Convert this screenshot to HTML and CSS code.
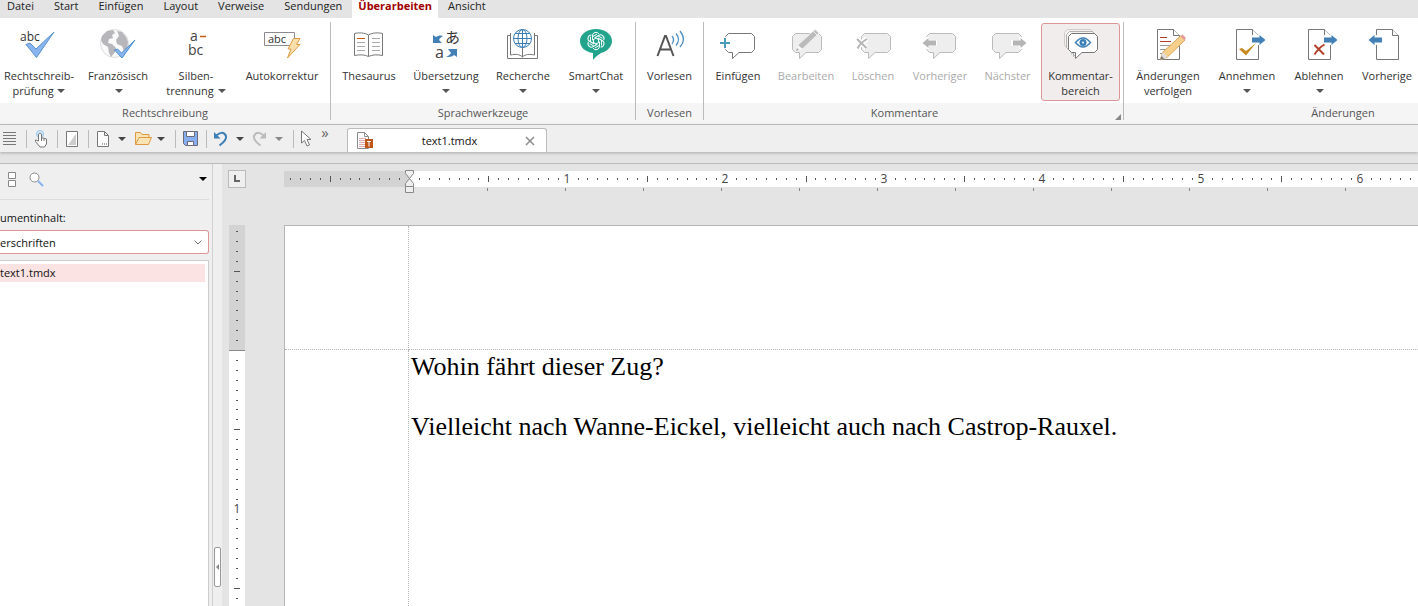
FILE: index.html
```html
<!doctype html>
<html lang="de">
<head>
    <meta charset="utf-8">
    <meta name="viewport" content="width=device-width, initial-scale=1.0">
    <title>text1.tmdx - TextMaker</title>
    <link rel="stylesheet" href="styles.css">
</head>
<body>
    <!-- shared shapes -->
    <svg class="defs" width="0" height="0" aria-hidden="true">
        <symbol id="bubble" viewBox="0 0 32 28">
            <path d="M3.500 1.500h23l3 3v13l-3 3H14l-6.500 6v-6h-4l-3-3v-13z" stroke-linejoin="round"/>
        </symbol>
        <symbol id="sheet" viewBox="0 0 24 32">
            <path d="M.5.500h16l6 6v24H.5z" fill="#fff" stroke="#777"/>
            <path d="M16.500.500v6h6" fill="#fff" stroke="#777"/>
        </symbol>
        <symbol id="arrow" viewBox="0 0 14 10">
            <path d="M0 2.500h7.500V0L13.500 5l-6 5V7.500H0z"/>
        </symbol>
    </svg>

    <nav class="menu">
        <a href="#">Datei</a>
        <a href="#">Start</a>
        <a href="#">Einfügen</a>
        <a href="#">Layout</a>
        <a href="#">Verweise</a>
        <a href="#">Sendungen</a>
        <a href="#" class="active">Überarbeiten</a>
        <a href="#">Ansicht</a>
    </nav>

    <div class="ribbon">
        <section class="group spelling">
            <div class="group-buttons">
                <button class="big">
                    <svg class="icon" viewBox="0 0 40 34"><text x="1" y="13" font-size="12" fill="#333">abc</text><path d="M7 16.500l4-1.500 6 6L35 4 17.500 29.500z" fill="#89b4ee" stroke="#5b94cf"/></svg>
                    <span>Rechtschreib-<br>prüfung <i class="caret"></i></span>
                </button>
                <button class="big">
                    <svg class="icon" viewBox="0 0 40 34"><circle cx="16.500" cy="15.500" r="14" fill="#fafafa" stroke="#dcdcdf"/><path d="M4 8l5-5 6-1 2 3-3 2 1 3-4 1-1 4 4 1 4 4-1 4-4 5-2-4-1-6-5-3-2-4zM19 3l5 1 4 5 2 5-1 7-3 2-2-5-5-2-1-4 3-4-1-3z" fill="#b6b6bb"/><path d="M16.500 22l3-1 4 4L37 12 24 30z" fill="#89b4ee" stroke="#4a8fd0"/></svg>
                    <span>Französisch<br><i class="caret"></i></span>
                </button>
                <button class="big">
                    <svg class="icon" viewBox="0 0 40 34"><text x="14" y="13" font-size="14" fill="#444">a</text><path d="M24 8.500h6" stroke="#c55a11" stroke-width="1.500"/><text x="12" y="27" font-size="14" fill="#444">bc</text></svg>
                    <span>Silben-<br>trennung <i class="caret"></i></span>
                </button>
                <button class="big">
                    <svg class="icon" viewBox="0 0 40 34"><path d="M2.500 4.500h30v13h-30z" fill="#fff" stroke="#8f8a90"/><text x="6" y="15" font-size="11" fill="#333">abc</text><path d="M31.500 10.500H38L34.500 16.500H38L25.500 30l3.500-9h-3z" fill="#fbe0ae" stroke="#dd9a42"/></svg>
                    <span>Autokorrektur</span>
                </button>
            </div>
            <h2>Rechtschreibung</h2>
        </section>

        <section class="group language">
            <div class="group-buttons">
                <button class="big">
                    <svg class="icon" viewBox="0 0 40 34" fill="none" stroke="#777"><path d="M19.500 7C15 4.500 10 4.500 5.500 5.500v22c5-1 10-1 14 1 4-2 9-2 14-1v-22c-4.500-1-9.500-1-14 1.500zv21"/><path d="M8 14.500h8M8 18.500h8M8 22.500h8M23 10.500h8M23 14.500h8M23 18.500h8M23 22.500h8" stroke="#aaa"/><path d="M8 10.500h8" stroke="#c55a11"/></svg>
                    <span>Thesaurus</span>
                </button>
                <button class="big">
                    <svg class="icon" viewBox="0 0 40 34"><path d="M7 7v8h9l-3-3c1-2 2-3 4-4-3-1-5 0-7 1z" fill="#4380b5"/><path d="M31 21v8l-3-2c-2 2-5 2-8 2 3-1 4-3 5-4l-3-4z" fill="#4380b5"/><text x="19" y="15" font-size="15" fill="#333">あ</text><text x="9" y="30" font-size="16" fill="#444">a</text></svg>
                    <span>Übersetzung<br><i class="caret"></i></span>
                </button>
                <button class="big">
                    <svg class="icon" viewBox="0 0 40 34" fill="none" stroke="#777"><path d="M8 7.500H4.500v23h30v-23H31M7.500 5v22c5-1 9-1 12 2 3-3 7-3 12-2V5M19.500 20v9"/><g stroke="#3c7fb6"><circle cx="19.500" cy="10.500" r="9" fill="#fff"/><ellipse cx="19.500" cy="10.500" rx="4.500" ry="9"/><path d="M10.500 10.500h18M19.500 1.500v18M12 5.500h15M12 15.500h15"/></g></svg>
                    <span>Recherche<br><i class="caret"></i></span>
                </button>
                <button class="big">
                    <svg class="icon" viewBox="0 0 40 34"><path d="M20 1c9 0 16 5 16 12 0 5-4 9-8 11-4 1-8 4-11 8V25C9 24 4 19 4 13 4 6 11 1 20 1z" fill="#22a48c"/><g fill="none" stroke="#fff"><path id="petal" d="M20 10l-3.500 2V8a3.500 3.500 0 0 1 6.500-2M17 8.500l4-2.500"/><use href="#petal" transform="rotate(60 20 13)"/><use href="#petal" transform="rotate(120 20 13)"/><use href="#petal" transform="rotate(180 20 13)"/><use href="#petal" transform="rotate(240 20 13)"/><use href="#petal" transform="rotate(300 20 13)"/></g></svg>
                    <span>SmartChat<br><i class="caret"></i></span>
                </button>
            </div>
            <h2>Sprachwerkzeuge</h2>
        </section>

        <section class="group reading">
            <div class="group-buttons">
                <button class="big">
                    <svg class="icon" viewBox="0 0 40 34" fill="none"><path d="M7.500 28L15 8h1l7.500 20M10 21.500h11" stroke="#555" stroke-width="2"/><path d="M22 8q3 3.500 0 8M26 5.500q5 6 0 12M30 3q7 8.500 0 16" stroke="#4c8fc4" stroke-width="1.300"/></svg>
                    <span>Vorlesen</span>
                </button>
            </div>
            <h2>Vorlesen</h2>
        </section>

        <section class="group comments">
            <div class="group-buttons">
                <button class="big">
                    <svg class="icon" viewBox="0 0 40 34"><use href="#bubble" x="7" y="4" width="32" height="28" fill="#fff" stroke="#777"/><path d="M0 9h9v12H0z" fill="#fff"/><path d="M2 15h10M7 10v10" stroke="#4a9aba" stroke-width="2"/></svg>
                    <span>Einfügen</span>
                </button>
                <button class="big" disabled>
                    <svg class="icon" viewBox="0 0 40 34"><use href="#bubble" x="6" y="4" width="32" height="28" fill="#eee" stroke="#bbb"/><path d="M10 23l2-6L29 1.500l4 3.500-16 15.500z" fill="#bbb" stroke="#eee"/><path d="M10 23l2-6 4.500 4z" fill="#f8f8f8"/><path d="M10 23l1-3 2 2z" fill="#aaa"/><path d="M27 3l4 4" stroke="#eee"/></svg>
                    <span>Bearbeiten</span>
                </button>
                <button class="big" disabled>
                    <svg class="icon" viewBox="0 0 40 34"><use href="#bubble" x="8" y="4" width="32" height="28" fill="#eee" stroke="#bbb"/><path d="M4 11l9.500 9M14 11q-7 4-9.500 9.500" fill="none" stroke="#fff" stroke-width="5"/><path d="M4 11l9.500 9M14 11q-7 4-9.500 9.500" fill="none" stroke="#b5b5b5" stroke-width="2"/></svg>
                    <span>Löschen</span>
                </button>
                <button class="big" disabled>
                    <svg class="icon" viewBox="0 0 40 34"><use href="#bubble" x="6" y="4" width="32" height="28" fill="#eee" stroke="#bbb"/><path d="M1 9h8v3h8v6H9v3H1z" fill="#fff"/><g transform="matrix(-1 0 0 1 16 10)"><use href="#arrow" width="14" height="10" fill="#b5b5b5"/></g></svg>
                    <span>Vorheriger</span>
                </button>
                <button class="big" disabled>
                    <svg class="icon" viewBox="0 0 40 34"><use href="#bubble" x="4" y="4" width="32" height="28" fill="#eee" stroke="#bbb"/><path d="M39 9h-8v3h-8v6h8v3h8z" fill="#fff"/><use href="#arrow" x="25" y="10" width="14" height="10" fill="#b5b5b5"/></svg>
                    <span>Nächster</span>
                </button>
                <button class="big pressed" aria-pressed="true">
                    <svg class="icon" viewBox="0 0 40 34" fill="#f5f2f2"><use href="#bubble" x="3" y="0" width="32" height="28" stroke="#d0cccc"/><use href="#bubble" x="5" y="2" width="32" height="28" stroke="#b5b0b0"/><use href="#bubble" x="7" y="4" width="32" height="28" fill="#fff" stroke="#777"/><path d="M14.500 14.500q7.500-9 15 0-7.500 9-15 0z" fill="#fff" stroke="#3c7fb6" stroke-width="1.300"/><circle cx="22" cy="14.500" r="3.500" fill="#3c7fb6"/><circle cx="22" cy="14.500" r="1" fill="#fff"/></svg>
                    <span>Kommentar-<br>bereich</span>
                </button>
            </div>
            <h2>Kommentare</h2>
            <button class="launcher" aria-label="Kommentare"></button>
        </section>

        <section class="group changes">
            <div class="group-buttons">
                <button class="big">
                    <svg class="icon" viewBox="0 0 40 34"><use href="#sheet" x="9" y="1" width="24" height="32"/><path d="M12 9.500h7M12 13.500h11" stroke="#b5402a"/><path d="M12 17.500h13M12 21.500h9M12 25.500h6" stroke="#999"/><path d="M12 32l3-8L32.500 8l4.500 4-17.500 17z" fill="#f6cf8b" stroke="#dda65a"/><path d="M15 24l4.500 5L12 32z" fill="#ddd"/><path d="M12 32l1.500-4 2.500 2.500z" fill="#777"/><path d="M32.500 8l2-1.500 3.500 3.500-1.500 2z" fill="#e8999c"/></svg>
                    <span>Änderungen<br>verfolgen</span>
                </button>
                <button class="big">
                    <svg class="icon" viewBox="0 0 40 34"><use href="#sheet" x="9" y="1" width="24" height="32"/><path d="M25 7h14v10H25z" fill="#fff"/><use href="#arrow" x="25" y="7" width="14" height="10" fill="#4380b5"/><path d="M12 21l3-1 4 3 10-8-10 12.500z" fill="#c68a1e"/></svg>
                    <span>Annehmen<br><i class="caret"></i></span>
                </button>
                <button class="big">
                    <svg class="icon" viewBox="0 0 40 34"><use href="#sheet" x="9" y="1" width="24" height="32"/><path d="M25 7h14v10H25z" fill="#fff"/><use href="#arrow" x="25" y="7" width="14" height="10" fill="#4380b5"/><path d="M15.500 17l9.500 9.500M25.500 16.500q-6 3.500-10 10" fill="none" stroke="#b5402a" stroke-width="2"/></svg>
                    <span>Ablehnen<br><i class="caret"></i></span>
                </button>
                <button class="big">
                    <svg class="icon" viewBox="0 0 40 34"><use href="#sheet" x="9" y="1" width="24" height="32"/><path d="M1 7h15v10H1z" fill="#fff"/><g transform="matrix(-1 0 0 1 15 7)"><use href="#arrow" width="14" height="10" fill="#4380b5"/></g></svg>
                    <span>Vorherige</span>
                </button>
            </div>
            <h2>Änderungen</h2>
        </section>
    </div>

    <div class="toolbar">
        <button class="tool" aria-label="Absatz"><svg viewBox="0 0 18 18"><path d="M1 2.500h13M1 5.500h13M1 8.500h13M1 11.500h13M1 14.500h13" stroke="#777"/></svg></button>
        <span class="sep"></span>
        <button class="tool" aria-label="Touchmodus"><svg viewBox="0 0 18 18"><circle cx="7" cy="4" r="3.500" fill="#dcebfa" stroke="#8ec5f2"/><path d="M5.500 11V4q1.500-2 3 0v4h1.500l3.500 1v5l-2 3H7l-4.500-5.500V10z" fill="#fff" stroke="#777" stroke-linejoin="round"/><path d="M8.500 8v3M11 8.500V11" stroke="#777"/></svg></button>
        <span class="sep"></span>
        <button class="tool" aria-label="Ansicht"><svg viewBox="0 0 18 18"><path d="M2.500 1.500h11v15h-11z" fill="#fff" stroke="#777"/><path d="M12 4v11H4z" fill="#ccc"/></svg></button>
        <span class="sep"></span>
        <button class="tool" aria-label="Neu"><svg viewBox="0 0 18 18"><path d="M2.500 1.500h7l4 4v11h-11z" fill="#fff" stroke="#777"/><path d="M9.500 1.500v4h4" fill="none" stroke="#777"/><path d="M7 14h1M9 14h1M11 14h1" stroke="#555"/></svg></button>
        <button class="drop" aria-label="Neu: Auswahl"></button>
        <button class="tool" aria-label="Öffnen"><svg viewBox="0 0 18 18"><path d="M1.500 14.500v-12h5l1.500 2h7v3" fill="#fde4b4" stroke="#dd9a42"/><path d="M1.500 14.500l3.500-7h12.500l-3 7z" fill="#fde4b4" stroke="#dd9a42" stroke-linejoin="round"/></svg></button>
        <button class="drop" aria-label="Öffnen: Auswahl"></button>
        <span class="sep"></span>
        <button class="tool" aria-label="Speichern"><svg viewBox="0 0 18 18"><path d="M1.500 1.500h14v14h-12l-2-2z" fill="#86aef0" stroke="#6b6b78"/><path d="M4.500 1.500h8v5h-8zM5.500 11.500h6v4h-6z" fill="#fff" stroke="#6b6b78"/></svg></button>
        <span class="sep"></span>
        <button class="tool" aria-label="Rückgängig"><svg viewBox="0 0 18 18"><path d="M2 6.500q8-7 11-.5 1 4-6.500 9.500" fill="none" stroke="#3c7fb6" stroke-width="2"/><path d="M1 2v6.500h6.500z" fill="#3c7fb6"/></svg></button>
        <button class="drop" aria-label="Rückgängig: Auswahl"></button>
        <button class="tool" aria-label="Wiederherstellen" disabled><svg viewBox="0 0 18 18"><path d="M13 6.500q-8-7-11-.5-1 4 6.500 9.500" fill="none" stroke="#bbb" stroke-width="2"/><path d="M14 2v6.500H7.500z" fill="#bbb"/></svg></button>
        <button class="drop" aria-label="Wiederherstellen: Auswahl" disabled></button>
        <span class="sep"></span>
        <button class="tool" aria-label="Auswählen"><svg viewBox="0 0 18 18"><path d="M1.500 1v12l3-2.500L7 16l2.500-1-2.500-5.500h4z" fill="#fff" stroke="#777"/></svg></button>
        <button class="more">»</button>
        <div class="doc-tab">
            <svg viewBox="0 0 18 18"><path d="M1.500.500h7l4 4v12h-11z" fill="#fff" stroke="#8a8a8a"/><path d="M8.500.500v4h4" fill="none" stroke="#8a8a8a"/><path d="M3 6.500h7M3 8.500h7M3 10.500h6M3 12.500h6M3 14.500h6" stroke="#e0a8ac"/><path d="M9 7h8v9H9z" fill="#c0561a"/><path d="M11 9.500h4M13 9.500v5" stroke="#fff"/></svg>
            <a href="#">text1.tmdx</a>
            <button class="close" aria-label="Schließen"><svg viewBox="0 0 10 10"><path d="M1 1l8 8M9 1L1 9" stroke="#8a8a8a" stroke-width="1.500"/></svg></button>
        </div>
    </div>

    <div class="workspace">
        <aside class="sidebar">
            <div class="side-tools">
                <button class="tool" aria-label="Ebenen"><svg viewBox="0 0 18 18"><path d="M2.500 2.500h7v6h-7zM2.500 10.500h7v6h-7z" fill="#fff" stroke="#888"/></svg></button>
                <button class="tool" aria-label="Suchen"><svg viewBox="0 0 18 18"><path d="M10 11l5 5" stroke="#86b4f0" stroke-width="2"/><circle cx="6.500" cy="7.500" r="4.500" fill="#fff" stroke="#888"/></svg></button>
                <button class="drop dark" aria-label="Menü"></button>
            </div>
            <label for="content">umentinhalt:</label>
            <select id="content">
                <option>erschriften</option>
            </select>
            <ul class="tree">
                <li>text1.tmdx</li>
            </ul>
        </aside>
        <div class="splitter"><button aria-label="Seitenleiste ausblenden"></button></div>
        <main class="editor">
            <div class="ruler-row">
                <button class="tab-type" aria-label="Tabstopp"><svg viewBox="0 0 16 16"><path d="M6 4v6h5" fill="none" stroke="#666" stroke-width="2"/></svg></button>
                <svg class="ruler" id="hRuler"></svg>
            </div>
            <div class="page-row">
                <svg class="v-ruler" id="vRuler"></svg>
                <div class="page">
                    <div class="margin-corner"></div>
                    <div class="margin-top"></div>
                    <div class="margin-left"></div>
                    <div class="text" contenteditable="true" spellcheck="false">
                        <p>Wohin fährt dieser Zug?</p>
                        <p><br></p>
                        <p>Vielleicht nach Wanne-Eickel, vielleicht auch nach Castrop-Rauxel.</p>
                    </div>
                </div>
            </div>
        </main>
    </div>

    <script>
        const NS = 'http://www.w3.org/2000/svg';
        const INCH = 158.6;
        const ZERO = 125;

        function add(svg, name, attrs, text) {
            const el = document.createElementNS(NS, name);
            for (const key in attrs) el.setAttribute(key, attrs[key]);
            if (text) el.textContent = text;
            svg.appendChild(el);
        }

        // sixteenth-inch dots, half-inch bars, a number on every inch
        function drawRuler(svg, vertical) {
            const length = vertical ? svg.clientHeight : svg.clientWidth;
            function rect(pos, cross, len, breadth, cls) {
                add(svg, 'rect', vertical
                    ? { x: cross, y: pos, width: breadth, height: len, class: cls }
                    : { x: pos, y: cross, width: len, height: breadth, class: cls });
            }
            rect(0, 0, ZERO, 16, 'outside');
            rect(ZERO, 0, length, 16, 'inside');
            for (let i = -12; ZERO + i * INCH / 16 < length; i++) {
                const pos = Math.round(ZERO + i * INCH / 16);
                if (i === 0) continue;
                if (i % 16 === 0) {
                    add(svg, 'text', vertical ? { x: 8, y: pos + 4 } : { x: pos - 1, y: 12 }, String(i / 16));
                } else if (i % 8 === 0) {
                    rect(pos, 5, 1, 6, 'tick');
                } else {
                    rect(pos, 7, 1, 2, 'tick');
                }
            }
            if (vertical) {
                rect(ZERO, 0, 1, 16, 'stop');
                return;
            }
            for (let x = ZERO + 78; x < length; x += 78) {
                rect(x, 17, 1, 3, 'stop');
            }
            add(svg, 'path', { d: 'M121.500-.5h8v3l-4 5 4 5v3h-8v-3l4-5-4-5zM121.500 15.500h8v6h-8z', class: 'indent' });
        }

        drawRuler(document.getElementById('hRuler'), false);
        drawRuler(document.getElementById('vRuler'), true);
    </script>
</body>
</html>
```
FILE: styles.css
```css
* {
    box-sizing: border-box;
}
body {
    margin: 0;
    height: 100vh;
    display: flex;
    flex-direction: column;
    overflow: hidden;
    background: #e4e4e4;
    color: #333;
    font: 11px/15px "Open Sans", "Noto Sans CJK JP", sans-serif;
}
button {
    margin: 0;
    padding: 0;
    border: 0;
    background: none;
    color: inherit;
    font: inherit;
}
svg {
    display: block;
}
.defs {
    position: absolute;
}
.menu {
    flex: none;
    display: flex;
    height: 18px;
    overflow: hidden;
}
.menu a {
    padding: 0 10px;
    line-height: 12px;
    color: #222;
    text-decoration: none;
}
.menu a:first-child {
    padding-left: 7px;
}
.menu .active {
    background: #fff;
    color: #a00000;
    font-weight: bold;
    padding: 0 6px;
}

/* ribbon */
.ribbon {
    flex: none;
    display: flex;
    height: 107px;
    overflow: hidden;
    border-bottom: 1px solid #bbb;
    background: linear-gradient(#fff 85px, #f5f5f5 85px);
}
.group {
    position: relative;
    flex: none;
    margin: 4px 0;
    border-right: 1px solid #bbb;
}
.group-buttons {
    display: grid;
    height: 81px;
    padding: 1px 0 2px;
}
.spelling .group-buttons {
    grid-template-columns: 78px 80px 76px 96px;
}
.language .group-buttons {
    grid-template-columns: 76px 78px 76px 70px;
    padding-right: 4px;
}
.reading .group-buttons {
    grid-template-columns: 67px;
}
.comments .group-buttons {
    grid-template-columns: repeat(2, 68px) 66px 68px 67px 79px;
    padding-right: 3px;
}
.changes .group-buttons {
    grid-template-columns: 88px 70px 74px 62px;
    width: 438px;
}
.group h2 {
    margin: 0;
    font-size: 11px;
    font-weight: normal;
    line-height: 20px;
    text-align: center;
    color: #555;
}
.comments h2 {
    padding-right: 18px;
}
.big {
    display: flex;
    flex-direction: column;
    align-items: center;
    gap: 6px;
    padding-top: 4px;
    border: 1px solid transparent;
    border-radius: 3px;
    white-space: nowrap;
}
.big:disabled {
    color: #aaa;
}
.pressed {
    border-color: #dc9696;
    background: #f1eded;
}
.icon {
    width: 40px;
    height: 34px;
}
.caret {
    display: inline-block;
    margin-left: 1px;
    vertical-align: 2px;
    border: 4px solid transparent;
    border-top-color: #555;
    border-bottom: 0;
}
.launcher {
    position: absolute;
    right: 2px;
    bottom: 0;
    border: 3px solid #888;
    border-top-color: transparent;
    border-left-color: transparent;
}

/* quick access toolbar */
.toolbar {
    flex: none;
    display: flex;
    align-items: center;
    height: 27px;
    padding-left: 2px;
    background: #efefef;
    box-shadow: 0 1px 3px #aaa;
}
.tool {
    flex: none;
    width: 18px;
    height: 18px;
}
.sep {
    width: 1px;
    height: 18px;
    margin: 0 6px;
    background: #bbb;
}
.drop {
    margin-left: 5px;
    border: 4px solid transparent;
    border-top-color: #444;
    border-bottom: 0;
}
.drop:disabled {
    border-top-color: #888;
}
.drop.dark {
    border-top-color: #000;
}
.drop + .tool {
    margin-left: 8px;
}
.drop + .sep {
    margin-left: 10px;
}
.more {
    align-self: flex-start;
    width: 14px;
    font-size: 15px;
    line-height: 14px;
    color: #666;
}
.doc-tab {
    display: flex;
    align-items: center;
    align-self: flex-end;
    width: 200px;
    height: 24px;
    margin-left: 15px;
    padding: 0 11px 0 8px;
    border: 1px solid #bbb;
    border-bottom: 0;
    border-radius: 3px 3px 0 0;
    background: #fff;
}
.doc-tab > svg {
    width: 18px;
    height: 18px;
}
.doc-tab a {
    flex: 1;
    text-align: center;
    color: #111;
    text-decoration: none;
}
.close {
    width: 10px;
    height: 10px;
}

/* workspace */
.workspace {
    flex: 1;
    display: flex;
    min-height: 0;
    margin-top: 11px;
    border-top: 1px solid #bbb;
}
.sidebar {
    flex: none;
    display: flex;
    flex-direction: column;
    width: 213px;
    padding-right: 3px;
    border-right: 1px solid #d0d0d0;
    background: #efefef;
    color: #111;
}
.side-tools {
    display: flex;
    align-items: center;
    gap: 4px;
    height: 36px;
    padding: 0 2px 6px 6px;
    border-bottom: 1px solid #dcdcdc;
}
.side-tools .drop {
    margin-left: auto;
}
.sidebar label {
    padding: 10px 0 5px;
}
.sidebar select {
    appearance: none;
    height: 24px;
    margin: 0;
    padding: 0;
    border: 1px solid #dc9696;
    border-left: 0;
    border-radius: 0 3px 3px 0;
    background: #fff url("data:image/svg+xml,%3Csvg xmlns='http://www.w3.org/2000/svg' width='8' height='5'%3E%3Cpath d='M.5.500l3.500 3.500 3.500-3.500' fill='none' stroke='%23777'/%3E%3C/svg%3E") no-repeat right 6px center;
    color: inherit;
    font: inherit;
}
.tree {
    flex: 1;
    margin: 6px 0 0;
    padding: 3px 3px 0 0;
    border: 1px solid #ccc;
    border-width: 1px 1px 0 0;
    background: #fff;
    list-style: none;
}
.tree li {
    line-height: 18px;
    background: #fce3e3;
}
.splitter {
    flex: none;
    display: flex;
    justify-content: center;
    align-items: flex-end;
    width: 9px;
    padding-bottom: 19px;
    background: #efefef;
}
.splitter button {
    display: flex;
    align-items: center;
    width: 7px;
    height: 40px;
    border: 1px solid #999;
    border-radius: 2px;
    background: #fff;
}
.splitter button::before {
    content: "";
    margin-left: 1px;
    border: 3px solid transparent;
    border-right-color: #888;
    border-left: 0;
}
.editor {
    flex: 1;
    display: flex;
    flex-direction: column;
    min-width: 0;
}
.ruler-row {
    flex: none;
    display: flex;
    height: 61px;
    padding: 6px 0 0 6px;
}
.tab-type {
    width: 18px;
    height: 18px;
    border: 1px solid #bbb;
    background: #efefef;
}
.ruler {
    flex: 1;
    height: 24px;
    margin: 1px 0 0 38px;
    min-width: 0;
    overflow: visible;
}
.page-row {
    flex: 1;
    display: flex;
    min-height: 0;
    padding-left: 7px;
}
.v-ruler {
    flex: none;
    width: 16px;
    height: 100%;
}
.outside {
    fill: #d3d3d3;
}
.inside {
    fill: #fff;
}
.tick {
    fill: #555;
}
.stop {
    fill: #888;
}
.indent {
    fill: #efefef;
    stroke: #888;
}
.ruler text,
.v-ruler text {
    fill: #444;
    font-size: 12px;
    text-anchor: middle;
}
.page {
    flex: 1;
    display: grid;
    grid-template-columns: 124px 1fr;
    grid-template-rows: 124px 1fr;
    min-width: 0;
    margin-left: 39px;
    border: 1px solid #b5b5b5;
    border-width: 1px 0 0 1px;
    background: #fff;
}
.margin-corner,
.margin-top {
    border-bottom: 1px dotted #b5b5b5;
}
.margin-corner,
.margin-left {
    border-right: 1px dotted #b5b5b5;
}
.text {
    padding: 2px 0 0 2px;
    color: #000;
    font: 26px/30px "Liberation Serif", serif;
    outline: none;
}
.text p {
    margin: 0;
}
```
